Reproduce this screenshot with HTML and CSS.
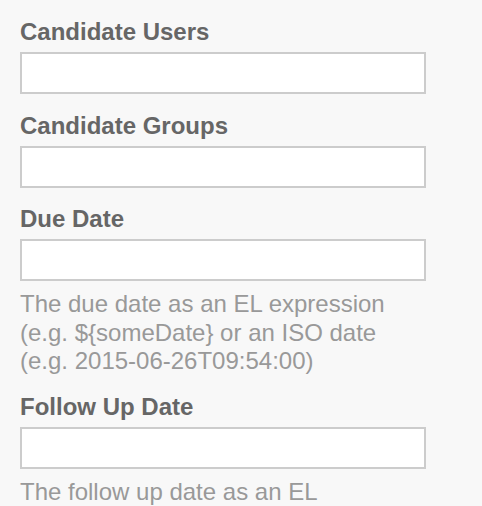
FILE: index.html
```html
<!DOCTYPE html>
<html lang="en">
<head>
<meta charset="utf-8">
<title>Properties</title>
<link rel="stylesheet" href="styles.css">
</head>
<body>
<div class="panel">
  <div class="field">
    <label class="field-label" for="candidateUsers">Candidate Users</label>
    <input class="field-input" id="candidateUsers" type="text">
  </div>
  <div class="field">
    <label class="field-label" for="candidateGroups">Candidate Groups</label>
    <input class="field-input" id="candidateGroups" type="text">
  </div>
  <div class="field">
    <label class="field-label" for="dueDate">Due Date</label>
    <input class="field-input" id="dueDate" type="text">
    <div class="field-desc">The due date as an EL expression (e.g. ${someDate} or an ISO date (e.g. 2015-06-26T09:54:00)</div>
  </div>
  <div class="field">
    <label class="field-label" for="followUpDate">Follow Up Date</label>
    <input class="field-input" id="followUpDate" type="text">
    <div class="field-desc">The follow up date as an EL expression (e.g. ${someDate} or an ISO date (e.g. 2015-06-26T09:54:00)</div>
  </div>
</div>
</body>
</html>
```

FILE: styles.css
```css
html, body {
  margin: 0;
  padding: 0;
  background: #f8f8f8;
}

body {
  font-family: "Liberation Sans", Arial, Helvetica, sans-serif;
}

.panel {
  padding: 20px 56px 0 20px;
}

.field {
  margin-bottom: 19.7px;
}

.field-label {
  display: block;
  font-size: 24px;
  line-height: 24px;
  font-weight: bold;
  color: #666;
  margin-bottom: 8px;
}

.field-input {
  display: block;
  box-sizing: border-box;
  width: 100%;
  height: 42px;
  margin: 0;
  padding: 0 10px;
  border: 2px solid #ccc;
  border-radius: 0;
  background: #fff;
  font-family: inherit;
  font-size: 24px;
  outline: none;
}

.field-desc {
  margin-top: 9px;
  font-size: 24px;
  line-height: 28.35px;
  color: #999;
}
```
